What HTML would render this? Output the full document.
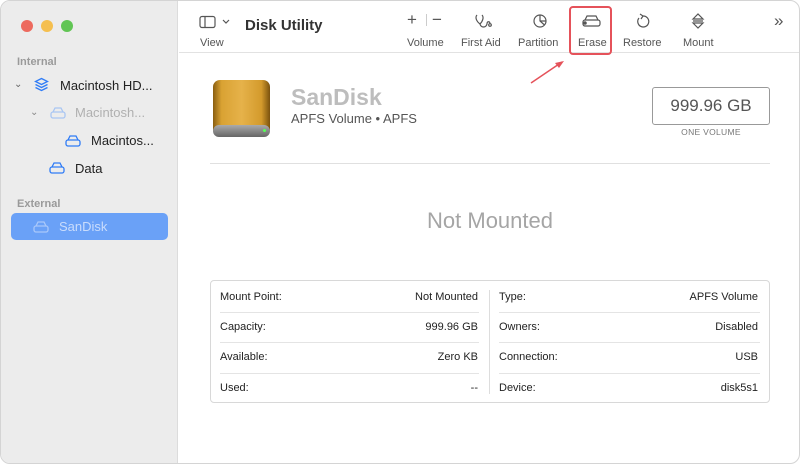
<!DOCTYPE html>
<html><head><meta charset="utf-8"><style>
*{margin:0;padding:0;box-sizing:border-box}
body{width:800px;height:464px;background:#fff;font-family:"Liberation Sans",sans-serif;position:relative;overflow:hidden;color:#222}
.win{position:absolute;left:0;top:0;width:800px;height:464px;border:1px solid #d4d4d4;border-radius:10px;overflow:hidden;background:#fff}
.side{position:absolute;left:0;top:0;width:177px;height:464px;background:#ececec;border-right:1px solid #dcdcdc}
.a{position:absolute;white-space:nowrap}
.dot{position:absolute;top:19px;width:12px;height:12px;border-radius:50%}
.sec{font-size:11px;color:#9a9a9a;font-weight:bold}
.it{font-size:13px;color:#222}
.tb{font-size:11px;color:#555;text-align:center}
.row{position:absolute;font-size:11px;color:#222}
.hl{position:absolute;height:1px;background:#e4e4e4}
</style></head><body><div class="win">
<div class="side">
<div class="dot" style="left:20px;background:#ed6a5e"></div>
<div class="dot" style="left:40px;background:#f5bf4f"></div>
<div class="dot" style="left:60px;background:#61c554"></div>
<div class="a sec" style="left:16px;top:55px">Internal</div>
<div class="a" style="left:13px;top:78px;font-size:10px;color:#666">&#8964;</div>
<svg class="a" style="left:33px;top:76px" width="15" height="15" viewBox="0 0 15 15" fill="none" stroke="#2f7cf6" stroke-width="1.3"><path d="M7.5 1.5L13.5 4.5L7.5 7.5L1.5 4.5Z"/><path d="M1.5 7.5L7.5 10.5L13.5 7.5"/><path d="M1.5 10.5L7.5 13.5L13.5 10.5"/></svg>
<div class="a it" style="left:59px;top:77px">Macintosh HD...</div>
<div class="a" style="left:29px;top:106px;font-size:10px;color:#888">&#8964;</div>
<svg class="a" style="left:49px;top:106px" width="16" height="12" viewBox="0 0 16 12" fill="none" stroke="#a9c6f3" stroke-width="1.3"><rect x="1" y="5" width="14" height="6" rx="2"/><path d="M3 5L5 1H11L13 5"/></svg>
<div class="a it" style="left:74px;top:104px;color:#b0b0b0">Macintosh...</div>
<svg class="a" style="left:64px;top:134px" width="16" height="12" viewBox="0 0 16 12" fill="none" stroke="#2f7cf6" stroke-width="1.3"><rect x="1" y="5" width="14" height="6" rx="2"/><path d="M3 5L5 1H11L13 5"/></svg>
<div class="a it" style="left:90px;top:132px">Macintos...</div>
<svg class="a" style="left:48px;top:161px" width="16" height="12" viewBox="0 0 16 12" fill="none" stroke="#2f7cf6" stroke-width="1.3"><rect x="1" y="5" width="14" height="6" rx="2"/><path d="M3 5L5 1H11L13 5"/></svg>
<div class="a it" style="left:74px;top:160px">Data</div>
<div class="a sec" style="left:16px;top:197px">External</div>
<div class="a" style="left:10px;top:212px;width:157px;height:27px;background:#6aa1f7;border-radius:5px"></div>
<svg class="a" style="left:32px;top:220px" width="16" height="12" viewBox="0 0 16 12" fill="none" stroke="#a9c8fa" stroke-width="1.3"><rect x="1" y="5" width="14" height="6" rx="2"/><path d="M3 5L5 1H11L13 5"/></svg>
<div class="a it" style="left:58px;top:218px;color:#c9dcfc">SanDisk</div>
</div>
<div class="a" style="left:178px;top:51px;width:622px;height:1px;background:#e2e2e2"></div>
<svg class="a" style="left:198px;top:14px" width="34" height="14" viewBox="0 0 34 14" fill="none" stroke="#555" stroke-width="1.2"><rect x="1" y="1.5" width="15" height="11" rx="2"/><path d="M6 1.5V12.5"/><path d="M24 5L27 8L30 5"/></svg>
<div class="a tb" style="left:199px;top:36px">View</div>
<div class="a" style="left:244px;top:16px;font-size:15px;font-weight:bold;color:#333">Disk Utility</div>
<div class="a" style="left:406px;top:9px;font-size:17px;color:#555">+</div>
<div class="a" style="left:425px;top:13px;width:1px;height:12px;background:#ccc"></div>
<div class="a" style="left:431px;top:9px;font-size:17px;color:#555">&#8722;</div>
<div class="a tb" style="left:406px;top:36px">Volume</div>
<svg class="a" style="left:473px;top:12px" width="20" height="16" viewBox="0 0 20 16" fill="none" stroke="#555" stroke-width="1.2"><path d="M3 2C1 4 2 8 6 11C9 8 10 4 8 2"/><path d="M6 11C7 15 12 15 13 11C13 8 16 8 16 11"/><circle cx="16" cy="12" r="1.3"/></svg>
<div class="a tb" style="left:460px;top:36px">First Aid</div>
<svg class="a" style="left:531px;top:12px" width="16" height="16" viewBox="0 0 16 16" fill="none" stroke="#555" stroke-width="1.2"><circle cx="8" cy="8" r="6"/><path d="M8 2V8L12.5 12"/><path d="M8 8H14"/></svg>
<div class="a tb" style="left:517px;top:36px">Partition</div>
<div class="a" style="left:568px;top:5px;width:43px;height:49px;border:2.5px solid #e5525a;border-radius:4px"></div>
<svg class="a" style="left:581px;top:14px" width="19" height="12" viewBox="0 0 19 12" fill="none" stroke="#555" stroke-width="1.2"><rect x="1" y="5" width="17" height="6" rx="2"/><path d="M3 5L5 1H14L16 5"/><circle cx="3" cy="8" r="1.2" fill="#555"/></svg>
<div class="a tb" style="left:577px;top:36px">Erase</div>
<svg class="a" style="left:634px;top:12px" width="16" height="16" viewBox="0 0 16 16" fill="none" stroke="#555" stroke-width="1.2"><path d="M4 5A5.5 5.5 0 1 0 8 3"/><path d="M5 1L8 3L6 6"/></svg>
<div class="a tb" style="left:622px;top:36px">Restore</div>
<svg class="a" style="left:689px;top:12px" width="16" height="16" viewBox="0 0 16 16" fill="none" stroke="#555" stroke-width="1.2"><path d="M3 6L8 1L13 6Z"/><path d="M3 8H13"/><path d="M3 10L8 15L13 10Z"/></svg>
<div class="a tb" style="left:682px;top:36px">Mount</div>
<div class="a" style="left:773px;top:10px;font-size:17px;color:#555">&#187;</div>
<svg class="a" style="left:525px;top:58px" width="40" height="28" viewBox="0 0 40 28"><path d="M5 24L36 3" stroke="#e5525a" stroke-width="1.5"/><path d="M38 2L29 4L33 9Z" fill="#e5525a"/></svg>
<div class="a" style="left:212px;top:79px;width:57px;height:56px;border-radius:7px;background:linear-gradient(90deg,#8a5e10,#d9a233 15%,#e6b24a 50%,#d39a2c 85%,#7a520e)"></div>
<div class="a" style="left:212px;top:124px;width:57px;height:12px;border-radius:6px;background:linear-gradient(#aaa,#666);"></div>
<div class="a" style="left:262px;top:128px;width:3px;height:3px;border-radius:50%;background:#5f5"></div>
<div class="a" style="left:290px;top:83px;font-size:23px;font-weight:bold;color:#bdbdbd">SanDisk</div>
<div class="a" style="left:290px;top:110px;font-size:13px;color:#555">APFS Volume • APFS</div>
<div class="a" style="left:651px;top:86px;width:118px;height:38px;border:1.5px solid #999;border-radius:3px;font-size:17px;color:#555;text-align:center;line-height:35px">999.96 GB</div>
<div class="a" style="left:651px;top:126px;width:118px;text-align:center;font-size:8.5px;color:#777;letter-spacing:.3px">ONE VOLUME</div>
<div class="a" style="left:209px;top:162px;width:560px;height:1px;background:#e0e0e0"></div>
<div class="a" style="left:209px;top:207px;width:560px;text-align:center;font-size:22px;color:#a5a5a5">Not Mounted</div>
<div class="a" style="left:209px;top:279px;width:560px;height:123px;border:1px solid #d8d8d8;border-radius:4px"></div>
<div class="a" style="left:488px;top:289px;width:1px;height:104px;background:#ddd"></div>
<div class="hl" style="left:219px;top:311px;width:259px"></div><div class="hl" style="left:219px;top:341px;width:259px"></div><div class="hl" style="left:219px;top:372px;width:259px"></div>
<div class="hl" style="left:498px;top:311px;width:261px"></div><div class="hl" style="left:498px;top:341px;width:261px"></div><div class="hl" style="left:498px;top:372px;width:261px"></div>
<div class="row" style="left:219px;top:290px">Mount Point:</div><div class="row" style="right:321px;top:290px">Not Mounted</div>
<div class="row" style="left:219px;top:320px">Capacity:</div><div class="row" style="right:321px;top:320px">999.96 GB</div>
<div class="row" style="left:219px;top:350px">Available:</div><div class="row" style="right:321px;top:350px">Zero KB</div>
<div class="row" style="left:219px;top:381px">Used:</div><div class="row" style="right:321px;top:381px">--</div>
<div class="row" style="left:498px;top:290px">Type:</div><div class="row" style="right:41px;top:290px">APFS Volume</div>
<div class="row" style="left:498px;top:320px">Owners:</div><div class="row" style="right:41px;top:320px">Disabled</div>
<div class="row" style="left:498px;top:350px">Connection:</div><div class="row" style="right:41px;top:350px">USB</div>
<div class="row" style="left:498px;top:381px">Device:</div><div class="row" style="right:41px;top:381px">disk5s1</div>
</div></body></html>
